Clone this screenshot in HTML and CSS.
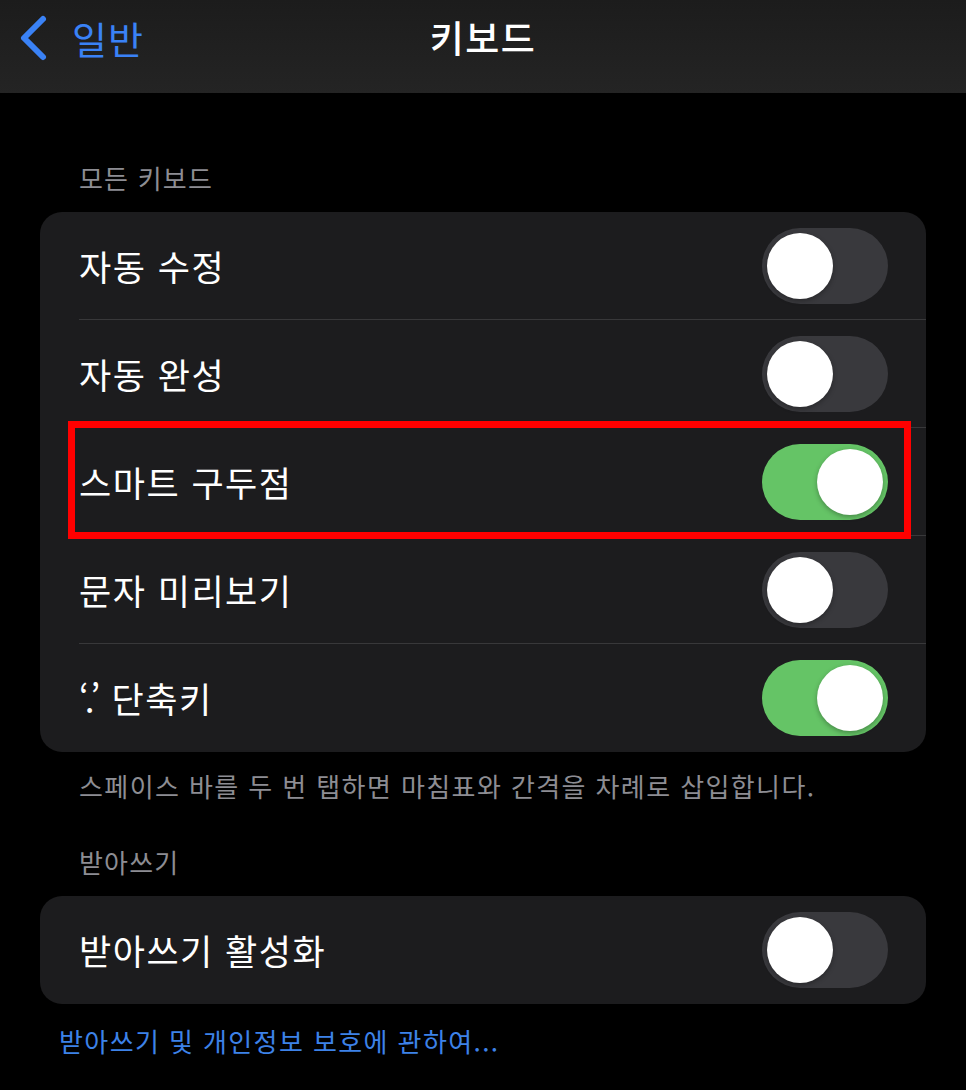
FILE: index.html
```html
<!DOCTYPE html>
<html lang="ko">
<head>
    <meta charset="UTF-8">
    <meta name="viewport" content="width=device-width, initial-scale=1.0">
    <title>키보드</title>
    <link rel="stylesheet" href="styles.css">
</head>
<body>
    <div class="navbar">
        <div class="back">
            <svg class="chevron" width="34" height="48" viewBox="0 0 34 48">
                <path d="M27 5 L8 24 L27 43" fill="none" stroke="#3a82f6" stroke-width="6" stroke-linecap="round" stroke-linejoin="round"/>
            </svg>
            <span>일반</span>
        </div>
        <div class="title">키보드</div>
    </div>

    <div class="content">
        <div class="group-title">모든 키보드</div>
        <ul class="card">
            <li class="row">
                <span class="label">자동 수정</span>
                <div class="switch"><i></i></div>
            </li>
            <li class="row">
                <span class="label">자동 완성</span>
                <div class="switch"><i></i></div>
            </li>
            <li class="row marked">
                <span class="label">스마트 구두점</span>
                <div class="switch on"><i></i></div>
                <div class="redbox"></div>
            </li>
            <li class="row">
                <span class="label">문자 미리보기</span>
                <div class="switch"><i></i></div>
            </li>
            <li class="row">
                <span class="label"><span class="quote">‘.’</span> 단축키</span>
                <div class="switch on"><i></i></div>
            </li>
        </ul>
        <div class="note">스페이스 바를 두 번 탭하면 마침표와 간격을 차례로 삽입합니다.</div>

        <div class="group-title second">받아쓰기</div>
        <ul class="card">
            <li class="row">
                <span class="label">받아쓰기 활성화</span>
                <div class="switch"><i></i></div>
            </li>
        </ul>
        <div class="link">받아쓰기 및 개인정보 보호에 관하여...</div>
    </div>
</body>
</html>
```

FILE: styles.css
```css
*{
    list-style: none;
    padding:0;
    margin:0;
    box-sizing: border-box;
}
body{
    background:#000;
    font-family: "Noto Sans CJK KR", "Noto Sans", sans-serif;
    color:#fff;
    width:966px;
    height:1090px;
    overflow:hidden;
}

.navbar{
    height:93px;
    background: linear-gradient(180deg, #1c1c1c, #242424);
    display:flex;
    align-items:center;
    justify-content:center;
    position:relative;
}
.back{
    position:absolute;
    left:16px;
    top:14px;
    display:flex;
    align-items:center;
    color:#3a82f6;
    font-size:38px;
    line-height:48px;
    letter-spacing:1px;
}
.chevron{
    margin-right:22px;
}
.title{
    font-size:37px;
    font-weight:500;
    letter-spacing:1.5px;
    line-height:48px;
    margin-top:-20px;
}

.content{
    padding:0 40px;
}
.group-title{
    margin-top:67px;
    padding-left:39px;
    font-size:26px;
    letter-spacing:1.2px;
    line-height:36px;
    color:#8d8d93;
}
.group-title.second{
    margin-top:40px;
}

.card{
    margin-top:16px;
    background:#1c1c1e;
    border-radius:22px;
}
.row{
    height:108px;
    margin-left:39px;
    padding-right:38px;
    display:flex;
    align-items:center;
    justify-content:space-between;
    border-bottom:1px solid #38383a;
    position:relative;
}
.row:last-child{
    border-bottom:none;
}
.label{
    font-size:35px;
    letter-spacing:1.5px;
    line-height:48px;
}
.quote{
    letter-spacing:-4px;
    margin-right:4px;
}

.switch{
    width:126px;
    height:76px;
    border-radius:38px;
    background:#39393d;
    padding:5px;
    display:flex;
}
.switch i{
    width:66px;
    height:66px;
    border-radius:50%;
    background:#fff;
    box-shadow:0 2px 5px rgba(0,0,0,0.3);
}
.switch.on{
    background:#65c466;
    justify-content:flex-end;
}

.redbox{
    position:absolute;
    left:-11px;
    right:15px;
    top:-7px;
    bottom:-4px;
    border:7px solid #ff0000;
}

.note{
    margin-top:16px;
    padding-left:39px;
    font-size:26px;
    letter-spacing:1.4px;
    line-height:36px;
    color:#8d8d93;
}
.card + .link{
    margin-top:19px;
}
.link{
    padding-left:19px;
    font-size:26px;
    letter-spacing:1.4px;
    line-height:36px;
    color:#3d82e8;
}
```
